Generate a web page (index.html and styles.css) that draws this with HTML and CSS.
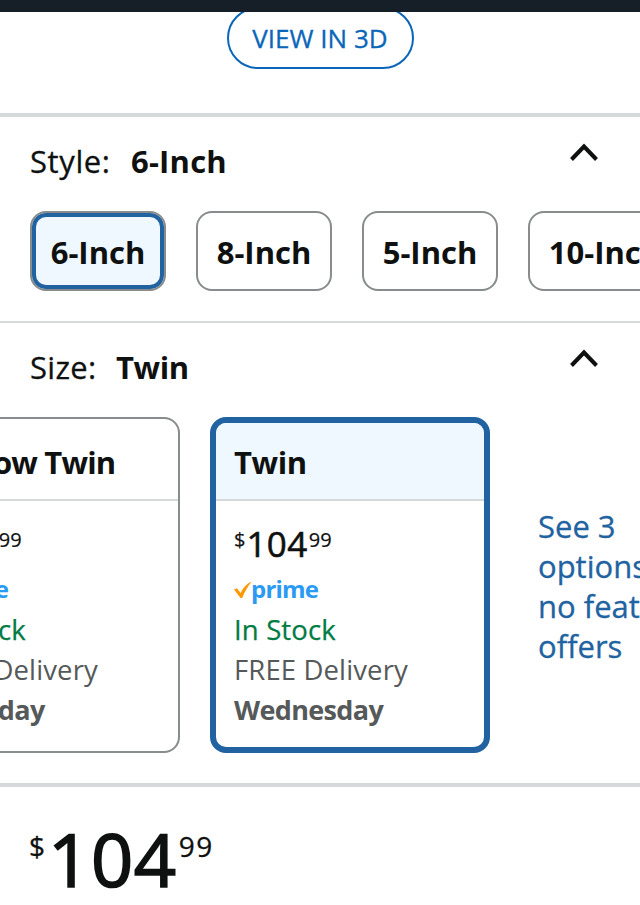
FILE: index.html
```html
<!DOCTYPE html>
<html lang="en">
<head>
<meta charset="utf-8">
<title>Product options</title>
<link rel="stylesheet" href="styles.css">
</head>
<body>
<div class="topbar"></div>
<section class="media"><a class="view3d"><span>VIEW IN 3D</span></a></section>
<section class="style">
  <header class="heading">
    <span class="label label-style">Style:</span><b class="value">6-Inch</b>
    <svg class="chevron" viewBox="0 0 30 22"><path d="M2.5 18.5 15 5.5l12.5 13"/></svg>
  </header>
  <div class="swatches">
    <div class="swatch selected">6-Inch</div>
    <div class="swatch">8-Inch</div>
    <div class="swatch">5-Inch</div>
    <div class="swatch wide">10-Inch</div>
  </div>
</section>
<section class="size">
  <header class="heading">
    <span class="label label-size">Size:</span><b class="value twin">Twin</b>
    <svg class="chevron" viewBox="0 0 30 22"><path d="M2.5 18.5 15 5.5l12.5 13"/></svg>
  </header>
  <div class="cards">
    <article class="card">
      <h3 class="title narrow">Narrow Twin</h3>
      <div class="details">
        <div class="price"><span class="sup">$</span><span class="whole">104</span><span class="sup">99</span></div>
        <div class="prime"><svg class="check" viewBox="0 0 18 18"><path d="M0 8.5 3 7.3 6.6 12C9 6.8 12.5 2.8 17.5.5 13.8 5.7 10.5 11 8.2 17H6.5Z"/></svg><span>prime</span></div>
        <div class="stock">In Stock</div>
        <div class="delivery">FREE Delivery</div>
        <b class="day thursday">Thursday</b>
      </div>
    </article>
    <article class="card selected">
      <h3 class="title">Twin</h3>
      <div class="details">
        <div class="price"><span class="sup">$</span><span class="whole">104</span><span class="sup">99</span></div>
        <div class="prime"><svg class="check" viewBox="0 0 18 18"><path d="M0 8.5 3 7.3 6.6 12C9 6.8 12.5 2.8 17.5.5 13.8 5.7 10.5 11 8.2 17H6.5Z"/></svg><span>prime</span></div>
        <div class="stock">In Stock</div>
        <div class="delivery">FREE Delivery</div>
        <b class="day">Wednesday</b>
      </div>
    </article>
    <a class="more">See 3<br>options,<br>no featured<br>offers</a>
  </div>
</section>
<section class="total"><span class="total-sup dollar">$</span><span class="total-whole">104</span><span class="total-sup">99</span></section>
</body>
</html>
```
FILE: styles.css
```css
* { box-sizing: border-box; }
body {
  margin: 0;
  height: 905px;
  overflow: hidden;
  background: #fff;
  color: #0f1111;
  font-family: "Open Sans", "Noto Sans", sans-serif;
  font-size: 31px;
  white-space: nowrap;
}
.topbar { height: 12px; background: #161e27; }
.media {
  height: 105px;
  border-bottom: 4px solid #d5d9d9;
  display: flex;
  justify-content: center;
  align-items: flex-start;
  overflow: hidden;
}
.view3d {
  flex: none;
  width: 187px;
  height: 62px;
  margin-top: -5px;
  border: 2px solid #0b66ba;
  border-radius: 31px;
  color: #0b66ba;
  font-size: 26px;
  line-height: 59px;
  text-align: center;
  -webkit-text-stroke: 0.3px;
}
.style { height: 206px; border-bottom: 2px solid #d5d9d9; }
.heading {
  display: flex;
  align-items: flex-start;
  height: 94px;
  padding: 24px 41px 0 30px;
  line-height: 41px;
}
.label { letter-spacing: 0.3px; -webkit-text-stroke: 0.3px; }
.label-style { width: 101px; letter-spacing: 0.6px; }
.label-size { width: 86px; }
.value { letter-spacing: 0.2px; }
.value.twin { letter-spacing: -0.4px; }
.chevron {
  width: 30px;
  height: 22px;
  margin-left: auto;
  fill: none;
  stroke: #0f1111;
  stroke-width: 4;
}
.swatches { display: flex; gap: 30px; padding-left: 30px; }
.swatch {
  flex: none;
  width: 136px;
  height: 80px;
  border: 2px solid #888c8c;
  border-radius: 16px;
  font-weight: 700;
  line-height: 78px;
  text-align: center;
}
.swatch.wide { width: 154px; }
.swatch.selected { background: #f0f8ff; box-shadow: inset 0 0 0 4px #2162a1; }
.size { height: 464px; border-bottom: 4px solid #d5d9d9; }
.cards { display: flex; gap: 30px; margin-left: -100px; }
.card {
  flex: none;
  width: 280px;
  height: 336px;
  border: 2px solid #888c8c;
  border-radius: 16px;
  overflow: hidden;
}
.title {
  height: 82px;
  margin: 0;
  padding-left: 22px;
  border-bottom: 2px solid #d5d9d9;
  font-size: 31px;
  line-height: 86px;
  letter-spacing: -0.4px;
}
.title.narrow { padding-left: 22px; letter-spacing: -0.8px; }
.details {
  padding: 22px 0 0 22px;
  font-size: 27.5px;
  line-height: 40px;
}
.card.selected { border: 6px solid #2162a1; }
.card.selected .title { height: 78px; padding-left: 18px; line-height: 78px; background: #f0f8ff; }
.card.selected .details { padding-left: 18px; }
.price { display: flex; height: 46px; }
.whole { margin-left: 1px; font-size: 35px; line-height: 42px; letter-spacing: 0.4px; -webkit-text-stroke: 0.6px; }
.sup { font-size: 20px; line-height: 34px; -webkit-text-stroke: 0.2px; }
.sup:last-child { margin-left: 1px; letter-spacing: 0.2px; }
.prime { display: flex; height: 41px; color: #2a9af3; font-size: 24px; font-weight: 700; letter-spacing: -0.8px; }
.prime span { margin-left: -1px; }
.check { width: 18px; height: 18px; margin-top: 12px; fill: #ff9900; }
.stock { color: #007c43; letter-spacing: 0.15px; -webkit-text-stroke: 0.25px; }
.delivery, .day { color: #565959; }
.delivery { letter-spacing: 0.12px; }
.day { display: block; font-size: 27px; letter-spacing: -0.65px; }
.thursday { letter-spacing: -0.6px; }
.more { margin: 89px 0 0 18px; color: #2162a1; line-height: 40px; -webkit-text-stroke: 0.3px; }
.total { display: flex; padding: 28px 0 0 29px; }
.total-whole { font-size: 74px; line-height: 88px; letter-spacing: 0.6px; -webkit-text-stroke: 1.7px; }
.total-sup { font-size: 28px; line-height: 63px; letter-spacing: 1.6px; -webkit-text-stroke: 0.3px; }
.total-sup:last-child { margin-left: 2px; }
.dollar { width: 19px; }
```
